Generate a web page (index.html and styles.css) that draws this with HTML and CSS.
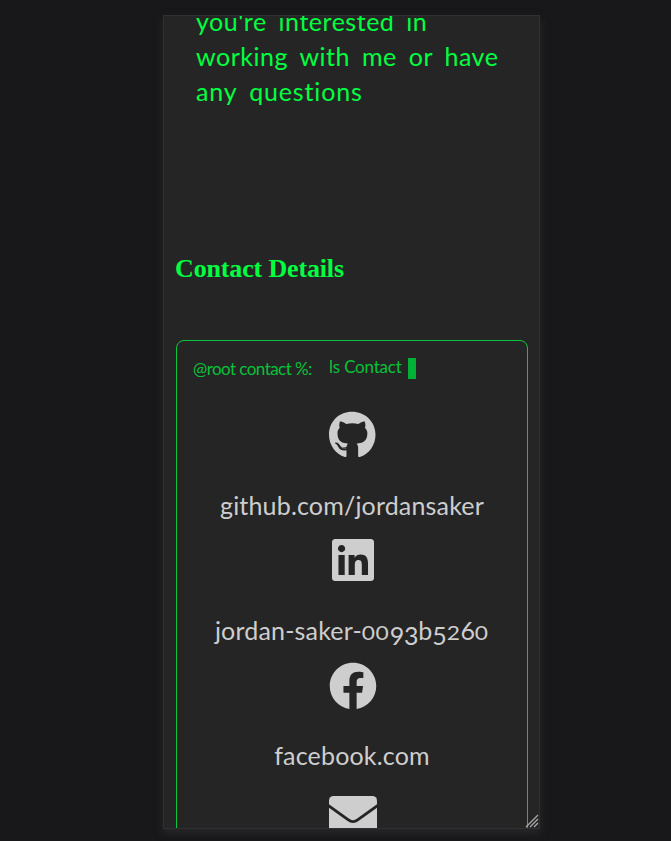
FILE: index.html
```html
<!DOCTYPE html>
<html lang="en">
<head>
<meta charset="utf-8">
<title>Contact</title>
<link rel="stylesheet" href="styles.css">
</head>
<body>
<main class="panel">
  <p class="intro">you're interested in<br>working with me or have<br><span class="last">any questions</span></p>
  <h2 class="title">Contact Details</h2>
  <section class="terminal">
    <div class="prompt"><span class="root">@root contact %:</span><span class="command">ls Contact</span><span class="cursor"></span></div>
    <div class="item">
      <svg class="icon" viewBox="0 0 496 512"><path d="M165.9 397.4c0 2-2.3 3.6-5.2 3.6-3.3.3-5.6-1.3-5.6-3.6 0-2 2.3-3.6 5.2-3.6 3-.3 5.6 1.3 5.6 3.6zm-31.1-4.5c-.7 2 1.3 4.3 4.3 4.9 2.6 1 5.6 0 6.200-2s-1.300-4.300-4.300-5.200c-2.600-.7-5.500.3-6.200 2.300zm44.200-1.700c-2.900.7-4.900 2.600-4.600 4.900.3 2 2.900 3.300 5.900 2.600 2.900-.7 4.900-2.600 4.600-4.600-.3-1.900-3-3.200-5.900-2.900zM244.800 8C106.100 8 0 113.300 0 252c0 110.900 69.800 205.800 169.500 239.200 12.800 2.300 17.300-5.600 17.300-12.100 0-6.200-.3-40.400-.3-61.400 0 0-70 15-84.700-29.800 0 0-11.400-29.100-27.800-36.600 0 0-22.900-15.700 1.600-15.400 0 0 24.900 2 38.600 25.800 21.900 38.600 58.600 27.500 72.900 20.900 2.300-16 8.800-27.100 16-33.700-55.900-6.200-112.300-14.300-112.300-110.500 0-27.500 7.600-41.300 23.600-58.900-2.600-6.500-11.100-33.300 2.600-67.900 20.900-6.500 69 27 69 27 20-5.600 41.500-8.500 62.800-8.500s42.800 2.900 62.800 8.500c0 0 48.100-33.600 69-27 13.700 34.700 5.200 61.400 2.600 67.900 16 17.700 25.800 31.500 25.800 58.900 0 96.500-58.900 104.200-114.800 110.500 9.200 7.900 17 22.900 17 46.400 0 33.700-.3 75.400-.3 83.600 0 6.500 4.600 14.400 17.300 12.100C428.200 457.800 496 362.900 496 252 496 113.300 383.500 8 244.800 8z"/></svg>
      <span class="label github">github.com/jordansaker</span>
    </div>
    <div class="item">
      <svg class="icon" viewBox="0 0 448 512"><path d="M416 32H31.900C14.300 32 0 46.500 0 64.300v383.400C0 465.500 14.300 480 31.900 480H416c17.600 0 32-14.500 32-32.300V64.300c0-17.800-14.400-32.300-32-32.300zM135.400 416H69V202.200h66.500V416zm-33.200-243c-21.300 0-38.500-17.300-38.500-38.500S80.900 96 102.200 96c21.200 0 38.500 17.300 38.500 38.500 0 21.300-17.200 38.500-38.500 38.500zm282.100 243h-66.400V312c0-24.800-.5-56.700-34.500-56.700-34.600 0-39.900 27-39.900 54.900V416h-66.400V202.200h63.700v29.200h.9c8.900-16.800 30.600-34.500 62.900-34.500 67.200 0 79.700 44.300 79.700 101.900V416z"/></svg>
      <span class="label linkedin">jordan-saker-<span class="short pair">00</span><span class="low">93</span>b<span class="low">5</span><span class="short">2</span>6<span class="short">0</span></span>
    </div>
    <div class="item">
      <svg class="icon facebook-icon" viewBox="0 0 512 512"><path d="M504 256C504 119 393 8 256 8S8 119 8 256c0 123.780 90.690 226.380 209.250 245V327.690h-63V256h63v-54.640c0-62.150 37-96.480 93.670-96.480 27.140 0 55.520 4.840 55.520 4.840v61h-31.280c-30.800 0-40.410 19.120-40.410 38.730V256h68.780l-11 71.690h-57.780V501C413.310 482.380 504 379.780 504 256z"/></svg>
      <span class="label facebook">facebook.com</span>
    </div>
    <div class="item">
      <svg class="icon mail-icon" viewBox="0 0 48 48"><rect y="6" width="48" height="42" rx="4.5"/><path class="fold" d="M-1 15.200 19 29.600Q24 33.600 29 29.600L49 15.200"/></svg>
    </div>
  </section>
  <svg class="grip" viewBox="0 0 14 14"><path d="M1 13 13 1M5 13l8-8M9 13l4-4"/></svg>
</main>
</body>
</html>
```
FILE: styles.css
```css
* { box-sizing: border-box; }
body {
  margin: 0;
  height: 841px;
  padding: 15px 131px 0 163px;
  background: #18181a;
  overflow: hidden;
}
.panel {
  position: relative;
  width: 377px;
  height: 814px;
  padding: 0 11px 0 12px;
  border: 1px solid #303032;
  background: #252525;
  box-shadow: 0 4px 8px #29292b;
  overflow: hidden;
  font-family: Lato, sans-serif;
  font-variant-ligatures: none;
}
.intro {
  margin: -12px 0 0 20px;
  color: #00ff41;
  font-size: 25px;
  line-height: 35px;
  letter-spacing: 0.52px;
  white-space: nowrap;
  word-spacing: 5px;
}
.last { letter-spacing: 0.85px; }
.title {
  margin: 145px 0 0 -1px;
  color: #00ff41;
  font: bold 26px/30px "Liberation Serif", serif;
  letter-spacing: -0.15px;
  white-space: nowrap;
}
.terminal {
  width: 352px;
  height: 520px;
  margin-top: 56px;
  padding-top: 17px;
  border: 1px solid #0bc63d;
  border-radius: 8px;
}
.prompt {
  display: flex;
  height: 21px;
  padding-left: 16px;
  color: #08c13a;
  font-size: 17px;
  line-height: 20px;
  white-space: nowrap;
}
.root { width: 136px; padding-top: 1px; letter-spacing: -0.55px; }
.command { width: 79px; margin-top: -1px; letter-spacing: -0.2px; }
.cursor { width: 8px; height: 21px; background: #00b135; }
.item {
  display: flex;
  flex-direction: column;
  align-items: center;
  height: 125px;
}
.prompt + .item { margin-top: 32px; }
.icon { flex: none; height: 48px; margin-left: 1px; fill: #cecece; }
.facebook-icon { margin-top: 1px; margin-bottom: -1px; }
.mail-icon { margin-top: 4px; }
.fold { fill: none; stroke: #252525; stroke-width: 2.800; }
.label {
  margin-top: 31px;
  color: #cecece;
  font-size: 25px;
  line-height: 30px;
  letter-spacing: 0.17px;
  white-space: nowrap;
}
.short {
  display: inline-block;
  margin: 0 1.200px;
  font-size: 19px;
  line-height: 20px;
  letter-spacing: 0.5px;
  transform: scaleX(1.2);
}
.pair { margin: 0 2.400px; }
.low { position: relative; top: 5px; letter-spacing: -0.3px; }
.grip {
  position: absolute;
  right: 0;
  bottom: 0;
  width: 14px;
  height: 14px;
  fill: none;
  stroke: #aaa;
  stroke-width: 1.3;
}
```
